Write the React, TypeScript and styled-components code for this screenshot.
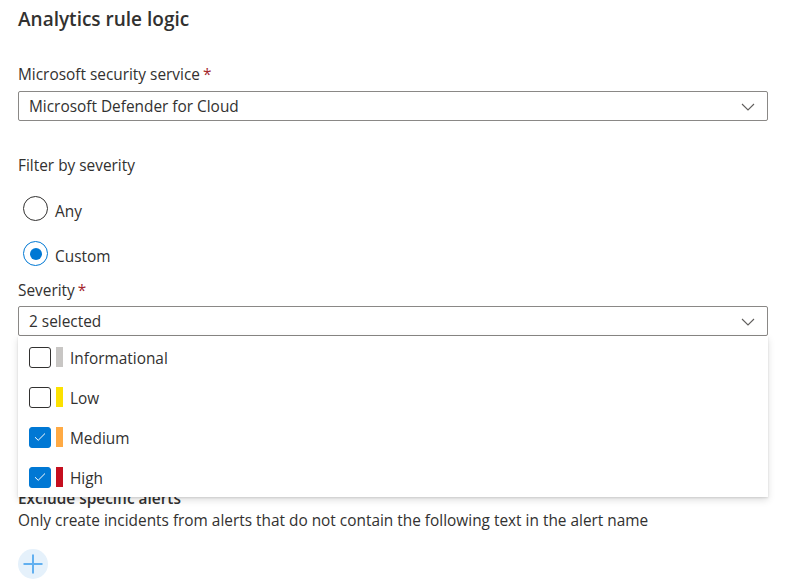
import React from "react";
import styled, { createGlobalStyle } from "styled-components";

const Global = createGlobalStyle`
  html, body { margin: 0; padding: 0; background: #ffffff; }
  body { font-family: "Segoe UI", "Open Sans", sans-serif; color: #323130; }
  * { box-sizing: border-box; }
`;

const Page = styled.div`
  width: 798px;
  height: 582px;
  padding: 5px 30px 0 18px;
  display: flex;
  flex-direction: column;
  overflow: hidden;
`;

const Title = styled.h2`
  margin: 0;
  font-size: 19px;
  line-height: 28px;
  font-weight: 600;
  color: #323130;
`;

const Label = styled.div<{ $top: number }>`
  margin-top: ${(p) => p.$top}px;
  font-size: 15.4px;
  line-height: 20px;
  color: #323130;
`;

const Req = styled.span`
  color: #a4262c;
  margin-left: 3px;
`;

const SelectWrap = styled.div<{ $top: number }>`
  position: relative;
  margin-top: ${(p) => p.$top}px;
`;

const SelectBox = styled.div`
  height: 30px;
  border: 1px solid #8a8886;
  border-radius: 2px;
  display: flex;
  align-items: center;
  justify-content: space-between;
  padding: 1px 12px 0 10px;
  font-size: 15.4px;
  color: #323130;
`;

const Chevron = () => (
  <svg width="14" height="8" viewBox="0 0 14 8" fill="none">
    <path d="M1 1 L7 7 L13 1" stroke="#605e5c" strokeWidth="1.1" />
  </svg>
);

const RadioGroup = styled.div`
  margin-top: 20px;
  display: flex;
  flex-direction: column;
  gap: 20px;
  padding-left: 5px;
`;

const RadioRow = styled.div`
  display: flex;
  align-items: center;
  gap: 7px;
  height: 25px;
  font-size: 15.4px;
`;

const RadioCircle = styled.span<{ $checked?: boolean }>`
  width: 25px;
  height: 25px;
  border-radius: 50%;
  border: 1px solid ${(p) => (p.$checked ? "#0078d4" : "#323130")};
  display: flex;
  align-items: center;
  justify-content: center;
  &::after {
    content: "";
    width: 12px;
    height: 12px;
    border-radius: 50%;
    background: ${(p) => (p.$checked ? "#0078d4" : "transparent")};
  }
`;

const RadioText = styled.span`
  padding-top: 5px;
`;

const Menu = styled.div`
  position: absolute;
  top: 30px;
  left: 0;
  right: 0;
  background: #ffffff;
  box-shadow: 0 3.2px 7.2px rgba(0, 0, 0, 0.132), 0 0.6px 1.8px rgba(0, 0, 0, 0.108);
  z-index: 10;
  padding: 1px 0 0;
`;

const Option = styled.div`
  height: 40px;
  display: flex;
  align-items: center;
  padding-left: 11px;
  font-size: 15.4px;
  color: #323130;
`;

const OptionText = styled.span`
  padding-top: 3px;
`;

const Check = styled.span<{ $checked?: boolean }>`
  width: 22px;
  height: 21px;
  border-radius: 3px;
  border: 1px solid ${(p) => (p.$checked ? "#0078d4" : "#323130")};
  background: ${(p) => (p.$checked ? "#0078d4" : "#ffffff")};
  display: flex;
  align-items: center;
  justify-content: center;
`;

const Bar = styled.span<{ $color: string }>`
  width: 7px;
  height: 20px;
  margin-left: 5px;
  margin-right: 7px;
  background: ${(p) => p.$color};
`;

const Heading = styled.div`
  margin-top: 153px;
  font-size: 15.4px;
  line-height: 20px;
  font-weight: 600;
`;

const Desc = styled.div`
  margin-top: 2px;
  font-size: 15.4px;
  line-height: 20px;
`;

const AddButton = styled.button`
  margin-top: 18px;
  width: 30px;
  height: 30px;
  border-radius: 50%;
  border: none;
  background: #e5f1fb;
  padding: 0;
  display: flex;
  align-items: center;
  justify-content: center;
`;

const CheckMark = () => (
  <svg width="12" height="10" viewBox="0 0 12 10" fill="none">
    <path d="M1 5.2 L4.2 8.3 L11 1.5" stroke="#ffffff" strokeWidth="1" />
  </svg>
);

const options = [
  { label: "Informational", color: "#c8c6c4", checked: false },
  { label: "Low", color: "#fce100", checked: false },
  { label: "Medium", color: "#ffaa44", checked: true },
  { label: "High", color: "#c50f1f", checked: true },
];

export default function App() {
  return (
    <>
      <Global />
      <Page>
        <Title>Analytics rule logic</Title>
        <Label $top={32}>
          Microsoft security service<Req>*</Req>
        </Label>
        <SelectWrap $top={6}>
          <SelectBox>
            <span>Microsoft Defender for Cloud</span>
            <Chevron />
          </SelectBox>
        </SelectWrap>
        <Label $top={35}>Filter by severity</Label>
        <RadioGroup>
          <RadioRow>
            <RadioCircle />
            <RadioText>Any</RadioText>
          </RadioRow>
          <RadioRow>
            <RadioCircle $checked />
            <RadioText>Custom</RadioText>
          </RadioRow>
        </RadioGroup>
        <Label $top={15}>
          Severity<Req>*</Req>
        </Label>
        <SelectWrap $top={5}>
          <SelectBox>
            <span>2 selected</span>
            <Chevron />
          </SelectBox>
          <Menu>
            {options.map((o) => (
              <Option key={o.label}>
                <Check $checked={o.checked}>{o.checked && <CheckMark />}</Check>
                <Bar $color={o.color} />
                <OptionText>{o.label}</OptionText>
              </Option>
            ))}
          </Menu>
        </SelectWrap>
        <Heading>Exclude specific alerts</Heading>
        <Desc>Only create incidents from alerts that do not contain the following text in the alert name</Desc>
        <AddButton aria-label="Add">
          <svg width="20" height="20" viewBox="0 0 20 20" fill="none">
            <path d="M10 0.5 V19.5 M0.5 10 H19.5" stroke="#62b0f0" strokeWidth="2" />
          </svg>
        </AddButton>
      </Page>
    </>
  );
}
